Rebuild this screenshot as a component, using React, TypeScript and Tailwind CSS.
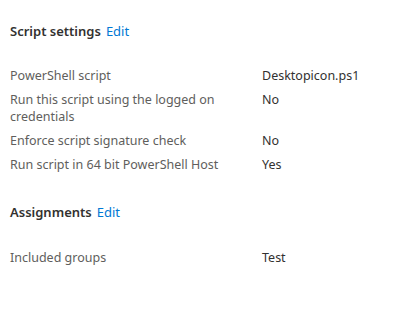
import React from "react";

const font = { fontFamily: '"Noto Sans", "Open Sans", sans-serif' };

function Header({ title }: { title: string }) {
  return (
    <div className="flex items-baseline gap-[5px] text-[13px] leading-[20px]">
      <span className="font-semibold text-[#323130]">{title}</span>
      <a className="text-[#0078d4]" href="#">
        Edit
      </a>
    </div>
  );
}

function Row({ label, value }: { label: string; value: string }) {
  return (
    <div className="grid grid-cols-[252px_1fr] py-[3.5px] text-[12.5px] leading-[17px]">
      <div className="pr-[24px] text-[#605e5c]">{label}</div>
      <div className="text-[#323130]">{value}</div>
    </div>
  );
}

export default function App() {
  return (
    <div className="h-[320px] w-[402px] bg-white pl-[10px] pt-[21px]" style={font}>
      <Header title="Script settings" />
      <div className="mt-[22px]">
        <Row label="PowerShell script" value="Desktopicon.ps1" />
        <Row label="Run this script using the logged on credentials" value="No" />
        <Row label="Enforce script signature check" value="No" />
        <Row label="Run script in 64 bit PowerShell Host" value="Yes" />
      </div>
      <div className="mt-[26px]">
        <Header title="Assignments" />
      </div>
      <div className="mt-[23px]">
        <Row label="Included groups" value="Test" />
      </div>
    </div>
  );
}
